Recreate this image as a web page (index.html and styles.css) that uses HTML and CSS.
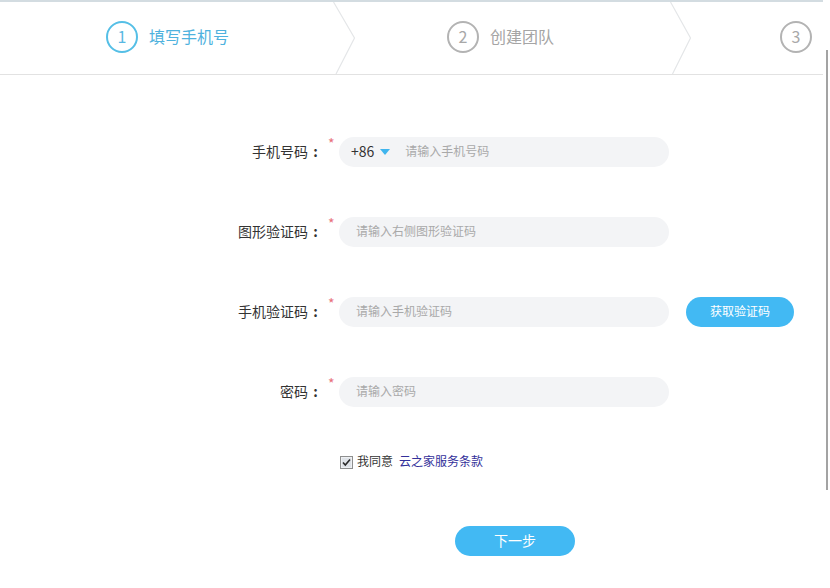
FILE: index.html
```html
<!DOCTYPE html>
<html lang="zh-CN">
<head>
<meta charset="utf-8">
<title>注册</title>
<link rel="stylesheet" href="styles.css">
</head>
<body>
<div class="page">
  <main class="main">
    <header class="steps">
      <div class="step step-1 active">
        <span class="num">1</span><span class="step-label">填写手机号</span>
      </div>
      <svg class="chev" width="24" height="72" viewBox="0 0 24 72"><polyline points="0.5,0 21.5,36 3,72" fill="none" stroke="#e4e6e8" stroke-width="1.2"/></svg>
      <div class="step step-2">
        <span class="num">2</span><span class="step-label">创建团队</span>
      </div>
      <svg class="chev" width="24" height="72" viewBox="0 0 24 72"><polyline points="0.5,0 20.5,36 2.5,72" fill="none" stroke="#e4e6e8" stroke-width="1.2"/></svg>
      <div class="step step-3">
        <span class="num">3</span>
      </div>
    </header>

    <form class="form">
      <label class="label">手机号码<span class="colon">:</span></label><span class="star">*</span>
      <div class="field">
        <span class="code">+86</span><span class="caret"></span>
        <span class="ph ph-phone">请输入手机号码</span>
      </div>
      <span class="empty"></span><span class="empty"></span>

      <label class="label">图形验证码<span class="colon">:</span></label><span class="star">*</span>
      <div class="field"><span class="ph">请输入右侧图形验证码</span></div>
      <span class="empty"></span><span class="empty"></span>

      <label class="label">手机验证码<span class="colon">:</span></label><span class="star">*</span>
      <div class="field"><span class="ph">请输入手机验证码</span></div>
      <span class="empty"></span>
      <button type="button" class="btn btn-code">获取验证码</button>

      <label class="label">密码<span class="colon">:</span></label><span class="star">*</span>
      <div class="field"><span class="ph">请输入密码</span></div>
      <span class="empty"></span><span class="empty"></span>

      <div class="agree">
        <svg class="check" width="13" height="13" viewBox="0 0 13 13">
          <rect x="0.5" y="0.5" width="12" height="12" fill="#eef0f3" stroke="#8e8f8f"/>
          <rect x="2" y="2" width="9" height="9" fill="#dfe3e8"/>
          <polyline points="3,6.5 5.3,9 10,3.5" fill="none" stroke="#2a2a2a" stroke-width="1.6"/>
        </svg>
        <span class="agree-text">我同意</span>
        <a class="terms">云之家服务条款</a>
      </div>

      <div class="next-row">
        <button type="button" class="btn btn-next">下一步</button>
      </div>
    </form>
  </main>
  <div class="gutter"><div class="vline"></div></div>
</div>
</body>
</html>
```

FILE: styles.css
```css
* { box-sizing: border-box; }
html, body { margin: 0; padding: 0; background: #fff; }
body {
  font-family: "Noto Sans CJK SC", "Noto Sans", sans-serif;
  color: #333;
  width: 830px;
  height: 588px;
  overflow: hidden;
}
.page { display: flex; }
.main { width: 823px; }
.gutter { width: 7px; padding-left: 3px; padding-top: 50px; }
.vline { width: 2px; height: 440px; background: #a3a3a3; }

.steps {
  display: flex;
  height: 75px;
  border-top: 2px solid #d3dce1;
  border-bottom: 1px solid #e2e2e2;
  align-items: stretch;
}
.step {
  display: flex;
  align-items: center;
  gap: 11px;
  color: #aaa;
  padding-bottom: 3px;
}
.step-1 { width: 333px; padding-left: 106px; }
.step-2 { width: 313px; padding-left: 90px; }
.step-3 { flex: 1; padding-left: 86px; }
.chev { flex: none; display: block; }
.num {
  width: 32px; height: 32px;
  border: 2px solid #b3b3b3;
  border-radius: 50%;
  display: flex; align-items: center; justify-content: center;
  font-size: 16px;
  color: #a8a8a8;
  line-height: 1;
  padding-bottom: 2px;
}
.step-label { font-size: 16px; color: #a5a5a5; line-height: 1; padding-bottom: 2px; }
.active .num { border-color: #55bfe6; color: #58b8e2; }
.active .step-label { color: #4fb2de; }

.form {
  display: grid;
  grid-template-columns: 323px 16px 330px 17px 108px;
  row-gap: 50px;
  padding-top: 62px;
  align-items: center;
}
.label {
  text-align: right;
  font-size: 14px;
  color: #333;
  padding-right: 1px;
  line-height: 1;
  padding-bottom: 3px;
}
.colon {
  display: inline-block;
  width: 14px;
  text-align: center;
  font-weight: bold;
  padding-left: 1px;
}
.star {
  align-self: start;
  color: #e8707c;
  font-size: 14px;
  line-height: 1;
  padding-left: 5px;
  margin-top: -1px;
}
.field {
  height: 30px;
  background: #f3f4f6;
  border-radius: 15px;
  display: flex;
  align-items: center;
  padding-left: 17px;
  padding-bottom: 3px;
}
.ph { font-size: 12px; color: #a9a9a9; line-height: 1; }
.code { font-size: 14px; color: #333; margin-left: -5px; line-height: 1; }
.caret {
  width: 0; height: 0;
  border-left: 5px solid transparent;
  border-right: 5px solid transparent;
  border-top: 6px solid #3fb5ee;
  margin-left: 6px;
  margin-top: 3px;
}
.ph-phone { margin-left: 15px; }

.btn {
  border: none;
  font-family: inherit;
  color: #fff;
  background: #42b9f3;
  border-radius: 15px;
  height: 30px;
  padding: 0 0 3px;
  line-height: 1;
  cursor: pointer;
}
.btn-code { width: 108px; font-size: 12px; }

.agree {
  grid-column: 3 / 6;
  display: flex;
  align-items: center;
  font-size: 12px;
  height: 12px;
  margin-top: -1px;
  padding-left: 1px;
  line-height: 1;
}
.check { flex: none; margin-right: 4px; }
.agree-text { color: #333; margin-right: 6px; padding-bottom: 2px; }
.terms { color: #33309a; padding-bottom: 2px; }

.next-row {
  grid-column: 3 / 6;
  margin-top: 8px;
  padding-left: 116px;
}
.btn-next { width: 120px; font-size: 14px; display: block; }
```
